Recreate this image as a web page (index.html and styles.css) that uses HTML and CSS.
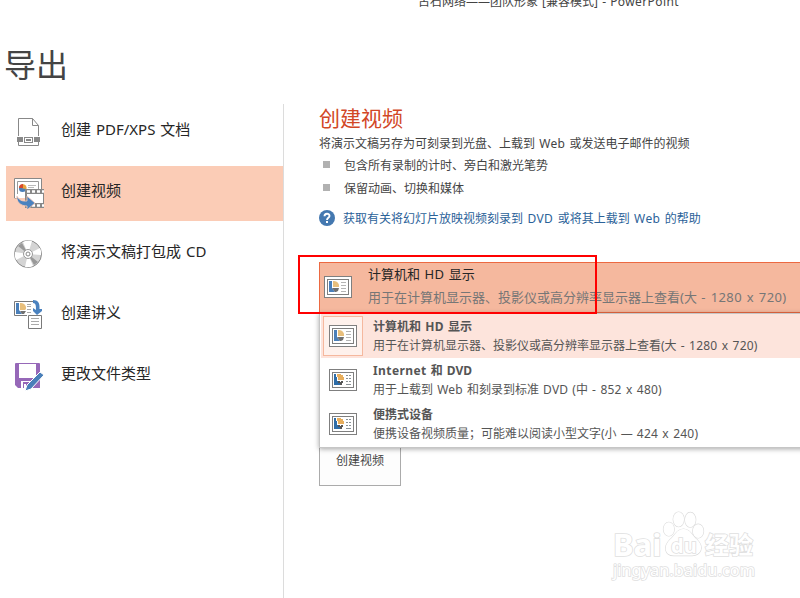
FILE: index.html
```html
<!DOCTYPE html>
<html lang="zh-CN">
<head>
<meta charset="UTF-8" />
<meta name="viewport" content="width=device-width, initial-scale=1" />
<title>导出</title>
<link rel="stylesheet" href="styles.css">
</head>
<body>

  <!-- Shared slide thumbnails -->
  <svg class="defs" aria-hidden="true">
    <symbol id="slide" viewBox="0 0 28 22">
      <rect x=".5" y=".5" width="27" height="21" fill="#fff" stroke="#7f7f7f" />
      <rect x="3.5" y="3.5" width="21" height="15" fill="#fff" stroke="#7f7f7f" />
      <path d="M5 5h3v7l3 4H5z" fill="#4a7fb9" />
      <path d="M9 5h1a5 5 0 0 1 5 6H9z" fill="#e8bf7c" />
      <path d="M8 12h7l-1 3-2 1h-1z" fill="#6f6f6f" />
      <path d="M17 6.5h5M17 9.5h5M17 12.5h5M17 15.5h5" stroke="#b5b5b5" />
    </symbol>
    <symbol id="slide-low" viewBox="0 0 28 22">
      <rect x=".5" y=".5" width="27" height="21" fill="#fff" stroke="#7f7f7f" />
      <rect x="3.5" y="3.5" width="21" height="15" fill="#fff" stroke="#7f7f7f" />
      <path d="M5 5h2v3h1v4h1v2h2v2H5z" fill="#2e6da8" />
      <path d="M8 5h4v1h2v2h1v3H9V8H8z" fill="#e8ae5c" />
      <path d="M9 12h2v1h1v-1h2v2h-1v2h-2v-2H9z" fill="#555" />
      <path d="M17 6.5h2m1 0h2M17 9.5h2m1 0h2M17 12.5h2m1 0h2M17 15.5h5" stroke="#8a9297" />
    </symbol>
  </svg>

  <header class="titlebar">古石网络——团队形象 [兼容模式] - <span class="en">PowerPoint</span></header>

  <h1>导出</h1>

  <div class="page">
    <nav class="sidebar">
      <a class="nav-item">
        <svg class="nav-icon" viewBox="0 0 32 32">
          <path d="M4.500 20V2.500h14l6 7V20M18.500 2.500v7h6M4.500 26v3.500h20V26" fill="none" stroke="#888" />
          <path d="M3 21h6v5H3zM20 21h6v5h-6z" fill="#888" />
          <rect x="10.500" y="21.500" width="8" height="5" fill="#fff" stroke="#888" />
          <rect x="12.500" y="23.500" width="4" height="1" fill="#fff" stroke="#888" />
        </svg>
        <span>创建 PDF/XPS 文档</span>
      </a>
      <a class="nav-item active">
        <svg class="nav-icon" viewBox="0 0 32 32">
          <path d="M.5 21V1.500h27V12M.5 21H3" fill="#fff" stroke="#888" />
          <path d="M1 2h26v11H12v8H1z" fill="#fff" />
          <path d="M3.500 17V4.500h21V12" fill="none" stroke="#999" />
          <circle cx="8.500" cy="11.500" r="3.500" fill="#4a7fb9" />
          <path d="M8.500 11.500V7a4 4 0 0 1 4 5z" fill="#e8a33c" />
          <path d="M9 11V7a4 4 0 0 0-4 4z" fill="#d6492c" />
          <path d="M14 8.500h8M14 10.500h6" stroke="#bbb" />
          <path d="M11 12h19v19H11z" fill="#888" />
          <path d="M13 17h16v9H13z" fill="#fff" />
          <path d="M13 14.500h17M13 28.500h17" stroke="#fff" stroke-width="2.500" stroke-dasharray="3 2" />
          <path d="M3 19c3 6 8 5 10 5v-5l8 7-8 7v-4C7 29 2 25 3 19z" fill="#4a82bf" stroke="#fbccb6" stroke-width=".8" />
        </svg>
        <span>创建视频</span>
      </a>
      <a class="nav-item">
        <svg class="nav-icon" viewBox="0 0 32 32">
          <circle cx="14" cy="16" r="13.500" fill="#d4d4d4" stroke="#8a8a8a" />
          <path d="M14 16L9 4a13 13 0 0 1 9-1zM14 16l12-6a13 13 0 0 1 1 7zM14 16l5 12a13 13 0 0 1-8 1zM14 16L2 22a13 13 0 0 1-1-8z" fill="#fff" />
          <path d="M14 16L4 8l4-3zM14 16l10 8-4 3z" fill="#999" />
          <circle cx="14" cy="16" r="4.500" fill="#fff" stroke="#999" />
          <circle cx="14" cy="16" r="2" fill="#fff" stroke="#888" />
        </svg>
        <span>将演示文稿打包成 CD</span>
      </a>
      <a class="nav-item">
        <svg class="nav-icon" viewBox="0 0 32 32">
          <path d="M19 2.500H.5v14H13" fill="#fff" stroke="#7a7a7a" />
          <path d="M2 4h3v7l3 4H2z" fill="#4a7fb9" />
          <path d="M6 4h1a5 5 0 0 1 5 6l-1 1H6z" fill="#e8bf7c" />
          <path d="M6 12h6l-2 3H8z" fill="#6f6f6f" />
          <path d="M13 5.500h4M13 7.500h4M13 10.500h4M13 13.500h4" stroke="#aaa" />
          <path d="M19 1c5 0 7 3 6.500 9H28v2l-5 4-4-4V9l3 2c0-4 0-7-3-7z" fill="#4a82bf" />
          <path d="M14.500 16.500h13v13h-13z" fill="#fff" stroke="#7a7a7a" />
          <path d="M17 19.500h8M17 22.500h8M17 25.500h8" stroke="#aaa" />
        </svg>
        <span>创建讲义</span>
      </a>
      <a class="nav-item">
        <svg class="nav-icon" viewBox="0 0 32 32">
          <path d="M1 4q0-1 1-1h23q1 0 1 1v24H4l-3-3z" fill="#9668b8" />
          <path d="M5 4h17v14H5zM7 21h9v7H7z" fill="#fff" />
          <path d="M9 22h6v6h-3v-4h-2v4H9z" fill="#9668b8" />
          <path d="M11 31l2-6 13-13 4 3-13 14z" fill="#4a7fb9" stroke="#fff" stroke-width="1" />
        </svg>
        <span>更改文件类型</span>
      </a>
    </nav>

    <main class="content">
      <h2>创建视频</h2>
      <p class="desc">将演示文稿另存为可刻录到光盘、上载到 <span class="en">Web</span> 或发送电子邮件的视频</p>
      <ul>
        <li>包含所有录制的计时、旁白和激光笔势</li>
        <li>保留动画、切换和媒体</li>
      </ul>
      <a class="help">
        <svg class="help-icon" viewBox="0 0 16 16">
          <circle cx="8" cy="8" r="8" fill="#4478b0" />
          <path d="M5.500 6.200C5.500 3 10.500 3 10.500 6c0 1.800-2.500 1.900-2.500 4" fill="none" stroke="#fff" stroke-width="1.900" />
          <rect x="7" y="11" width="2" height="2" fill="#fff" />
        </svg>
        <span>获取有关将幻灯片放映视频刻录到 <span class="en">DVD</span> 或将其上载到 <span class="en">Web</span> 的帮助</span>
      </a>

      <div class="picker">
        <div class="selected">
          <svg class="slide"><use href="#slide" /></svg>
          <div>
            <div class="selected-name">计算机和 <span class="en">HD</span> 显示</div>
            <div class="selected-info">用于在计算机显示器、投影仪或高分辨率显示器上查看(大 <span class="en">- 1280 x 720)</span></div>
          </div>
        </div>
        <div class="menu">
          <div class="option current">
            <div class="thumb"><svg class="slide"><use href="#slide" /></svg></div>
            <div>
              <div class="option-name">计算机和 <span class="en">HD</span> 显示</div>
              <div class="option-info">用于在计算机显示器、投影仪或高分辨率显示器上查看(大 <span class="en">- 1280 x 720)</span></div>
            </div>
          </div>
          <div class="option">
            <div class="thumb"><svg class="slide"><use href="#slide-low" /></svg></div>
            <div>
              <div class="option-name"><span class="en">Internet</span> 和 DVD</div>
              <div class="option-info">用于上载到 <span class="en">Web</span> 和刻录到标准 <span class="en">DVD</span> (中 <span class="en">- 852 x 480)</span></div>
            </div>
          </div>
          <div class="option">
            <div class="thumb"><svg class="slide"><use href="#slide-low" /></svg></div>
            <div>
              <div class="option-name">便携式设备</div>
              <div class="option-info">便携设备视频质量；可能难以阅读小型文字(小 — <span class="en">424 x 240)</span></div>
            </div>
          </div>
        </div>
        <div class="highlight"></div>
      </div>

      <button class="create">创建视频</button>
    </main>
  </div>

  <!-- Watermark -->
  <div class="watermark" aria-hidden="true">
    <div class="mark-row">
      <span class="mark-bai">Bai</span>
      <span class="mark-paw">
        <svg viewBox="0 0 44 48">
          <g fill="#fff" stroke="#dcdcdc" stroke-width="1.300">
            <ellipse cx="7" cy="19" rx="5.500" ry="7" />
            <ellipse cx="17" cy="9" rx="5.500" ry="7.500" />
            <ellipse cx="29" cy="9.500" rx="5.500" ry="7.500" />
            <ellipse cx="37" cy="21" rx="5.500" ry="7" />
            <path d="M22 19c7 0 9 7 14 11 8 8 3 16-5 16H12c-9 0-11-9-4-16 5-4 7-11 14-11z" />
          </g>
        </svg>
        <span class="mark-du">du</span>
      </span>
      <span class="mark-jy">经验</span>
    </div>
    <div class="mark-url">jingyan.baidu.com</div>
  </div>

</body>
</html>
```

FILE: styles.css
```css
/* Base styling */
* {
  box-sizing: border-box;
}

body {
  margin: 0;
  width: 800px;
  height: 598px;
  overflow: hidden;
  position: relative;
  background: #fff;
  color: #444;
  font-family: "Noto Sans", "Noto Sans CJK SC", sans-serif;
  font-size: 12px;
  white-space: nowrap;
  word-spacing: 1px;
  display: flex;
  flex-direction: column;
}

h1, h2, p, ul {
  margin: 0;
  padding: 0;
  font-weight: 400;
}

svg {
  display: block;
  flex: none;
}

.defs {
  position: absolute;
  width: 0;
  height: 0;
}

/* Latin words and numbers inside Chinese text */
.en {
  letter-spacing: 0.4px;
}

/* Window title, cut off by the top edge */
.titlebar {
  height: 10px;
  padding-left: 418px;
  line-height: 16px;
  margin-top: -6px;
  flex: none;
}

h1 {
  height: 100px;
  padding: 37px 0 0 4px;
  font-size: 32px;
  line-height: 48px;
  flex: none;
}

.page {
  display: flex;
  flex: 1;
}

/* Left navigation */
.sidebar {
  width: 284px;
  padding: 1px 0 0 6px;
  border-right: 1px solid #dcdcdc;
  display: flex;
  flex-direction: column;
  gap: 6px;
}

.nav-item {
  height: 55px;
  padding: 0 0 0 8px;
  display: flex;
  gap: 15px;
  color: #262626;
  font-size: 15px;
  line-height: 48px;
}

.nav-item.active {
  background: #fbccb6;
}

.nav-icon {
  width: 32px;
  height: 32px;
  margin-top: 11px;
}

/* Right panel */
.content {
  flex: 1;
  min-width: 0;
  padding-left: 35px;
}

h2 {
  color: #d24726;
  font-size: 21px;
  line-height: 28px;
}

.desc {
  height: 21px;
  line-height: 24px;
}

ul {
  list-style: none;
}

li {
  display: flex;
  align-items: center;
  gap: 14px;
  height: 23px;
  padding-left: 4px;
}

li::before {
  content: "";
  width: 7px;
  height: 7px;
  background: #b1b1b1;
}

.help {
  display: flex;
  align-items: center;
  gap: 8px;
  height: 20px;
  margin-top: 9px;
  color: #2b6299;
  word-spacing: 1.3px;
}

.help span {
  margin-top: -1px;
}

.help-icon {
  width: 16px;
  height: 16px;
}

/* Quality picker */
.picker {
  position: relative;
  margin-top: 34px;
}

.selected {
  display: flex;
  gap: 16px;
  height: 51px;
  padding-left: 4px;
  background: #f5b89e;
  border: 1px solid #ec6941;
  border-right: 0;
  font-size: 13px;
}

.slide {
  width: 28px;
  height: 22px;
}

.selected .slide {
  margin-top: 13px;
}

.selected-name {
  color: #262626;
  line-height: 22px;
}

.selected-info {
  color: #767676;
  line-height: 25px;
}

.menu {
  position: absolute;
  top: 51px;
  left: 0;
  right: -10px;
  height: 135px;
  padding-left: 1px;
  background: #fff;
  border: 1px solid #c6c6c6;
  box-shadow: 0 1px 5px rgba(0, 0, 0, 0.35);
  z-index: 1;
}

.option {
  display: flex;
  gap: 10px;
  height: 44px;
  padding: 4px 0 0 2px;
  color: #555;
}

.option.current {
  background: #fde4dc;
}

.thumb {
  width: 40px;
  height: 40px;
  margin-top: -2px;
  display: flex;
  align-items: center;
  justify-content: center;
}

.current .thumb {
  background: #fef1ec;
  border: 1px solid #f5b89e;
}

.option-name {
  font-weight: 700;
  line-height: 17px;
}

.option-info {
  line-height: 21px;
}

.option-info .en {
  letter-spacing: 0.2px;
}

.highlight {
  position: absolute;
  top: -7px;
  left: -21px;
  width: 299px;
  height: 59px;
  border: 2px solid #f00;
  z-index: 2;
}

.create {
  display: block;
  width: 82px;
  height: 51px;
  margin-top: 122px;
  padding: 0 0 2px;
  background: #fdfdfd;
  border: 1px solid #ababab;
  color: #444;
  font: inherit;
}

/* Watermark in the lower right corner */
.watermark {
  position: absolute;
  left: 613px;
  top: 511px;
  color: #fff;
  -webkit-text-stroke: 1.6px #e0e0e0;
  paint-order: stroke fill;
}

.mark-row {
  display: flex;
  align-items: flex-end;
  height: 47px;
  font-weight: 700;
}

.mark-bai {
  width: 49px;
  font-size: 31px;
  line-height: 27px;
}

.mark-paw {
  position: relative;
  width: 43px;
}

.mark-paw svg {
  width: 43px;
  height: 48px;
}

.mark-du {
  position: absolute;
  left: 9px;
  bottom: 1px;
  font-size: 20px;
  line-height: 22px;
}

.mark-jy {
  font-size: 24px;
  line-height: 27px;
}

.mark-url {
  font-size: 16.4px;
  line-height: 23px;
}
```
